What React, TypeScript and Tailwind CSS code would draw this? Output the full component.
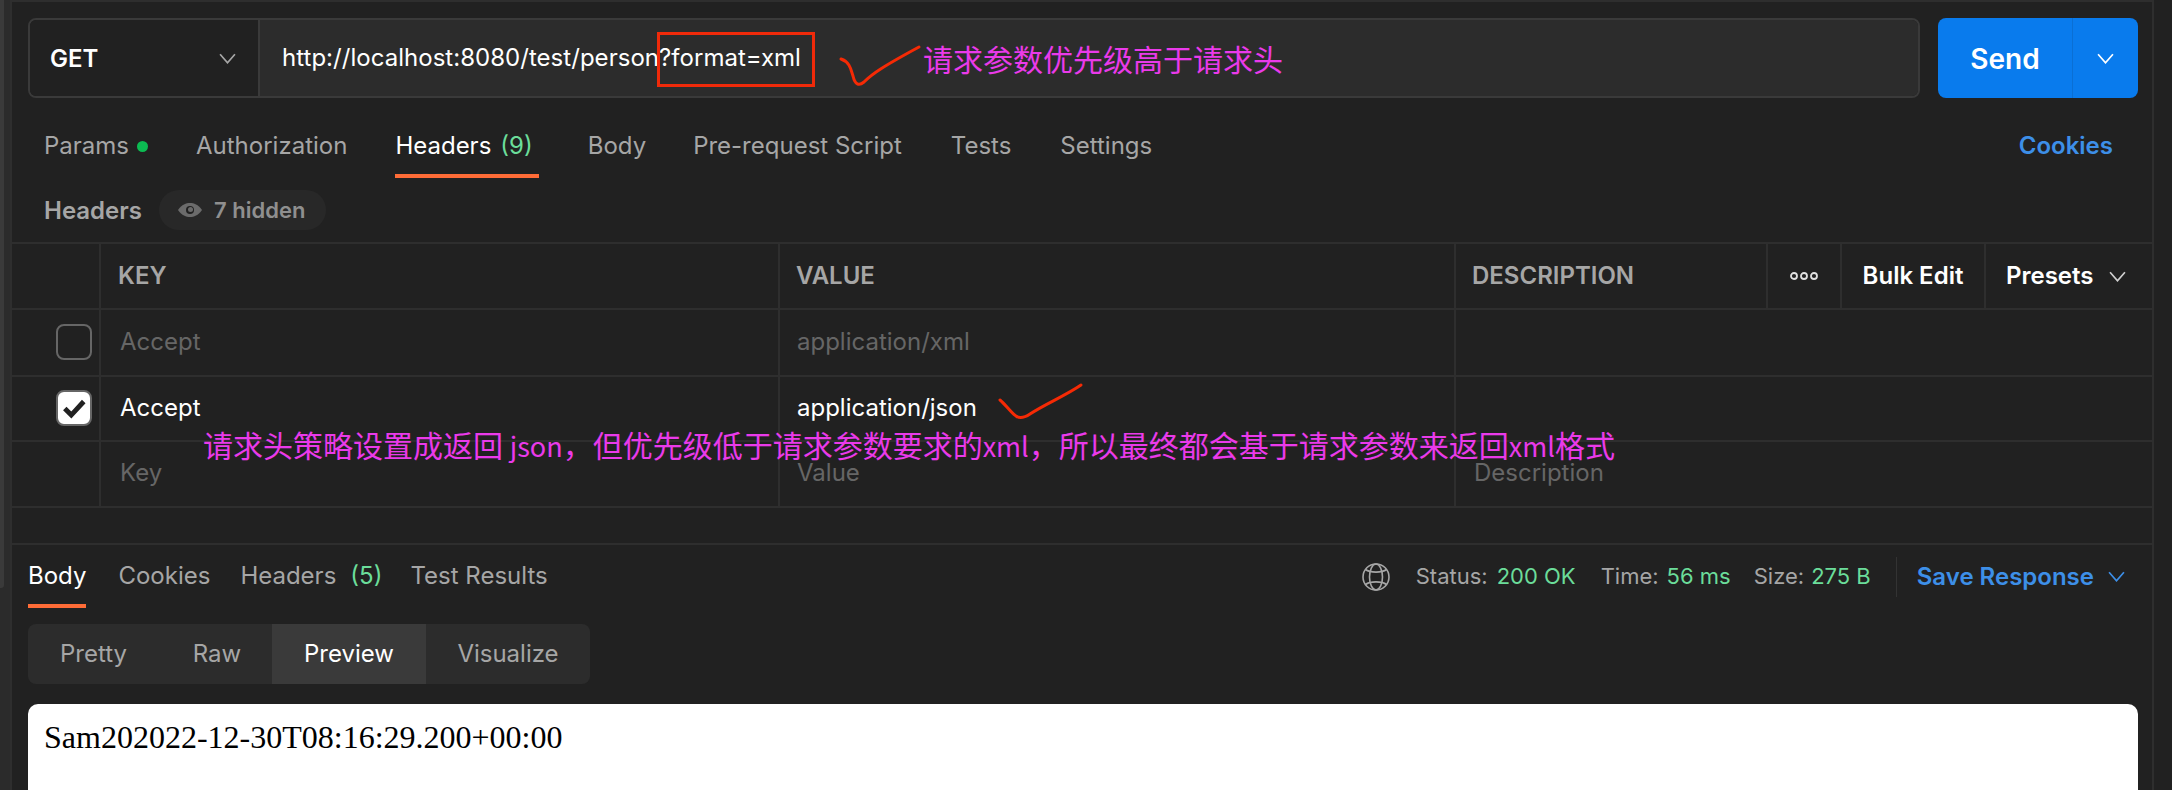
import React from 'react';

const Chevron = ({ className }: { className: string }) => (
  <svg viewBox="0 0 16 10" fill="none" stroke="currentColor" strokeWidth="1.6" className={className}>
    <path d="M1 1 L8 9 L15 1" />
  </svg>
);

const GlobeIcon = () => (
  <svg viewBox="0 0 28 28" fill="none" stroke="#a6a6a6" strokeWidth="1.6" className="w-[28px] h-[28px]">
    <circle cx="14" cy="14" r="13" />
    <ellipse cx="14" cy="14" rx="6.5" ry="13" />
    <path d="M3.5 6.5 C8 10 20 10 24.5 6.5" />
    <path d="M3.5 21.5 C8 18 20 18 24.5 21.5" />
  </svg>
);

const EyeIcon = () => (
  <svg viewBox="0 0 24 14" className="w-[24px] h-[14px]">
    <path d="M0 7 C4 1.5 8 0 12 0 C16 0 20 1.5 24 7 C20 12.5 16 14 12 14 C8 14 4 12.5 0 7 Z" fill="#6b6b6b" />
    <circle cx="12" cy="7" r="4" fill="#212121" />
    <circle cx="12.5" cy="6.5" r="2.5" fill="#6b6b6b" />
  </svg>
);

const Segment = ({ label, active, className = '' }: { label: string; active?: boolean; className?: string }) => (
  <div className={`h-full flex items-center justify-center ${active ? 'bg-[#3a3a3a] text-white' : 'text-[#a6a6a6]'} ${className}`}>
    {label}
  </div>
);

export default function App() {
  return (
    <div className="relative w-[2172px] h-[790px] overflow-hidden bg-[#212121] flex font-['Inter',sans-serif] text-[24px] text-[#a6a6a6]">
      {/* sidebar edge */}
      <div className="w-[10px] shrink-0 bg-[#2b2b2b]">
        <div className="w-[4px] h-[588px] bg-[#3a3a3a] rounded-br-[3px]" />
      </div>

      <div className="w-[2144px] shrink-0 border-l-2 border-r-2 border-t-2 border-[#2e2e2e] flex flex-col">
        {/* request bar */}
        <div className="flex gap-[18px] pt-[16px] pl-[16px] pr-[14px]">
          <div className="flex-1 h-[80px] flex border-2 border-[#3a3a3a] rounded-[8px] overflow-hidden">
            <div className="w-[230px] shrink-0 bg-[#212121] border-r-2 border-[#3a3a3a] flex items-center justify-between pl-[20px] pr-[22px]">
              <span className="font-semibold text-white pt-[1px]">GET</span>
              <Chevron className="w-[17px] h-[11px] text-[#a6a6a6]" />
            </div>
            <div className="flex-1 bg-[#2c2c2c] flex items-center pl-[22px] text-white tracking-[0.03px]">
              http://localhost:8080/test/person?format=xml
            </div>
          </div>
          <div className="w-[200px] h-[80px] bg-[#097bed] rounded-[8px] flex text-white">
            <div className="w-[135px] flex items-center justify-center pt-[1px] text-[28px] font-semibold border-r border-[#0a6fd4]">Send</div>
            <div className="flex-1 flex items-center justify-center">
              <Chevron className="w-[17px] h-[11px]" />
            </div>
          </div>
        </div>

        {/* request tabs */}
        <div className="h-[80px] pt-[16px] flex items-stretch pl-[32px] pr-[39px]">
          <div className="flex items-center gap-[8px] mr-[48px]">
            Params
            <span className="w-[11px] h-[11px] rounded-full bg-[#0cbb52]" />
          </div>
          <div className="flex items-center mr-[48px]">Authorization</div>
          <div className="relative flex items-center pr-[6px] mr-[49px] text-white">
            Headers
            <span className="ml-[9px] text-[#6bdd9a]">(9)</span>
            <div className="absolute left-0 right-0 bottom-0 h-[4px] bg-[#ff6c37]" />
          </div>
          <div className="flex items-center mr-[47px]">Body</div>
          <div className="flex items-center mr-[49px]">Pre-request Script</div>
          <div className="flex items-center mr-[49px]">Tests</div>
          <div className="flex items-center">Settings</div>
          <div className="ml-auto flex items-center font-semibold text-[#3d8fe8]">Cookies</div>
        </div>

        {/* headers summary */}
        <div className="h-[64px] flex items-center pl-[32px]">
          <span className="font-semibold text-[#a6a6a6] pt-[2px]">Headers</span>
          <div className="ml-[17px] w-[167px] h-[40px] rounded-full bg-[#282828] flex items-center pl-[19px] gap-[12px] font-semibold text-[#8f8f8f] text-[22px]">
            <EyeIcon />
            7 hidden
          </div>
        </div>

        {/* headers table */}
        <div className="grid grid-cols-[89px_679px_676px_312px_74px_144px_1fr] h-[66px] border-t-2 border-[#2e2e2e] font-semibold">
          <div className="border-r-2 border-[#2e2e2e]" />
          <div className="border-r-2 border-[#2e2e2e] flex items-center pl-[17px]">KEY</div>
          <div className="border-r-2 border-[#2e2e2e] flex items-center pl-[16px]">VALUE</div>
          <div className="border-r-2 border-[#2e2e2e] flex items-center pl-[16px]">DESCRIPTION</div>
          <div className="border-r-2 border-[#2e2e2e] flex items-center justify-center">
            <svg viewBox="0 0 28 10" fill="none" stroke="#e0e0e0" strokeWidth="1.8" className="w-[28px] h-[10px]">
              <circle cx="4" cy="5" r="3" />
              <circle cx="14" cy="5" r="3" />
              <circle cx="24" cy="5" r="3" />
            </svg>
          </div>
          <div className="border-r-2 border-[#2e2e2e] flex items-center justify-center text-white">Bulk Edit</div>
          <div className="flex items-center pl-[20px] gap-[15px] text-white">
            Presets
            <Chevron className="w-[17px] h-[11px] text-[#d0d0d0]" />
          </div>
        </div>

        <div className="grid grid-cols-[89px_679px_676px_1fr] h-[67px] border-t-2 border-[#2e2e2e] text-[#666666]">
          <div className="border-r-2 border-[#2e2e2e] flex items-center justify-end pr-[7px] pb-[2px]">
            <div className="w-[36px] h-[36px] rounded-[8px] border-2 border-[#666666]" />
          </div>
          <div className="border-r-2 border-[#2e2e2e] flex items-center pl-[19px] pb-[2px]">Accept</div>
          <div className="border-r-2 border-[#2e2e2e] flex items-center pl-[17px] pb-[2px]">application/xml</div>
          <div />
        </div>

        <div className="grid grid-cols-[89px_679px_676px_1fr] h-[65px] border-t-2 border-[#2e2e2e] text-white">
          <div className="border-r-2 border-[#2e2e2e] flex items-center justify-end pr-[7px] pb-[2px]">
            <div className="w-[36px] h-[36px] rounded-[8px] border-2 border-[#666666] bg-white flex items-center justify-center">
              <svg viewBox="0 0 24 24" fill="none" stroke="#212121" strokeWidth="4.5" className="w-[26px] h-[26px]">
                <path d="M3.5 12.5 L9.5 18.5 L21 6" />
              </svg>
            </div>
          </div>
          <div className="border-r-2 border-[#2e2e2e] flex items-center pl-[19px] pb-[2px]">Accept</div>
          <div className="border-r-2 border-[#2e2e2e] flex items-center pl-[17px] pb-[2px]">application/json</div>
          <div />
        </div>

        <div className="grid grid-cols-[89px_679px_676px_1fr] h-[66px] border-t-2 border-[#2e2e2e] text-[#666666]">
          <div className="border-r-2 border-[#2e2e2e]" />
          <div className="border-r-2 border-[#2e2e2e] flex items-center pl-[19px] pb-[2px]">Key</div>
          <div className="border-r-2 border-[#2e2e2e] flex items-center pl-[17px] pb-[2px]">Value</div>
          <div className="flex items-center pl-[18px] pb-[2px]">Description</div>
        </div>

        <div className="h-[37px] shrink-0 border-t-2 border-[#2e2e2e]" />

        {/* response */}
        <div className="flex-1 border-t-2 border-[#2e2e2e] flex flex-col pl-[16px] pr-[14px]">
          <div className="h-[63px] shrink-0 flex items-stretch">
            <div className="relative flex items-center pb-[2px] text-white mr-[32px]">
              Body
              <div className="absolute left-0 right-0 bottom-0 h-[4px] bg-[#ff6c37]" />
            </div>
            <div className="flex items-center pb-[2px] mr-[30px]">Cookies</div>
            <div className="flex items-center pb-[2px] mr-[28px]">
              Headers
              <span className="ml-[14px] text-[#6bdd9a]">(5)</span>
            </div>
            <div className="flex items-center pb-[2px]">Test Results</div>
            <div className="ml-auto flex items-center text-[22px]">
              <GlobeIcon />
              <span className="ml-[26px]">Status:</span>
              <span className="ml-[9px] text-[#6bdd9a]">200 OK</span>
              <span className="ml-[25px]">Time:</span>
              <span className="ml-[8px] text-[#6bdd9a]">56 ms</span>
              <span className="ml-[23px]">Size:</span>
              <span className="ml-[7px] text-[#6bdd9a]">275 B</span>
              <div className="ml-[25px] w-px h-[40px] bg-[#333333]" />
              <span className="ml-[20px] text-[24px] font-semibold text-[#3d8fe8]">Save Response</span>
              <Chevron className="ml-[14px] mr-[13px] w-[17px] h-[11px] text-[#3d8fe8]" />
            </div>
          </div>
          <div className="mt-[16px] w-[562px] h-[60px] shrink-0 rounded-[8px] bg-[#2c2c2c] overflow-hidden grid grid-cols-[120px_124px_154px_1fr] items-stretch">
            <Segment label="Pretty" className="pl-[11px]" />
            <Segment label="Raw" className="pl-[14px]" />
            <Segment label="Preview" active />
            <Segment label="Visualize" />
          </div>
          <div className="mt-[20px] flex-1 bg-white rounded-t-[10px] pl-[16px] pt-[14px] text-black text-[32px] leading-[38px] font-['Liberation_Serif',serif]">
            Sam202022-12-30T08:16:29.200+00:00
          </div>
        </div>
      </div>

      {/* annotations drawn on top of the screenshot */}
      <div className="absolute left-[657px] top-[32px] w-[158px] h-[55px] border-[3px] border-[#f02a0a]" />
      <svg viewBox="0 0 2172 790" fill="none" stroke="#f52a05" strokeLinecap="round" strokeLinejoin="round" className="absolute inset-0 w-[2172px] h-[790px] pointer-events-none">
        <path d="M841 59 C850 62 851 70 853 76 C855 85 859 86 864 82 C872 74 882 67 919 47" strokeWidth="3" />
        <path d="M1000 400 C1006 405 1012 414 1016 416 C1020 419 1024 418 1030 414 C1045 404 1065 396 1081 385" strokeWidth="3" />
      </svg>
      <div className="absolute left-[923px] top-[38px] text-[30px] leading-[40px] whitespace-nowrap text-[#ea3aea] font-['Noto_Sans_CJK_SC',sans-serif]">
        请求参数优先级高于请求头
      </div>
      <div className="absolute left-[203px] top-[424px] text-[30px] leading-[40px] whitespace-nowrap text-[#ea3aea] font-['Noto_Sans_CJK_SC',sans-serif]">
        请求头策略设置成返回 <span className="text-[27px]">json</span>，但优先级低于请求参数要求的<span className="text-[27px]">xml</span>，所以最终都会基于请求参数来返回<span className="text-[27px]">xml</span>格式
      </div>
    </div>
  );
}
